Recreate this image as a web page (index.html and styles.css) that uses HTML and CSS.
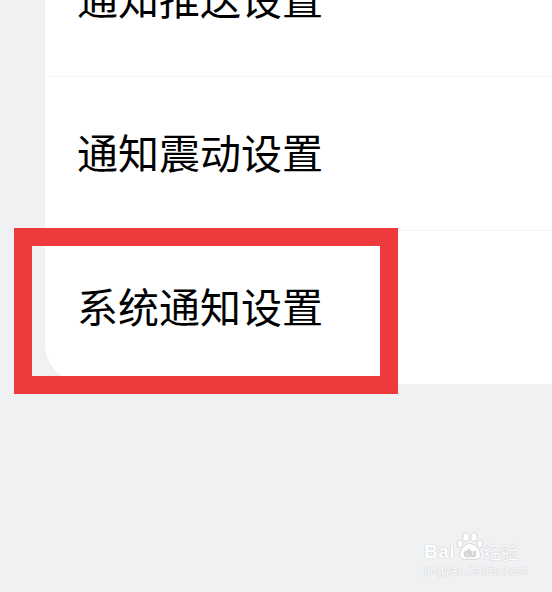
FILE: index.html
```html
<!DOCTYPE html>
<html lang="zh-CN">
<head>
    <meta charset="UTF-8">
    <meta name="viewport" content="width=device-width, initial-scale=1.0">
    <title>通知设置</title>
    <link rel="stylesheet" href="styles.css">
</head>
<body>
    <div class="card">
        <div class="row">通知推送设置</div>
        <div class="row">通知震动设置</div>
        <div class="row last">
            系统通知设置
            <div class="highlight"></div>
        </div>
    </div>

    <div class="watermark">
        <div class="wm-top">
            <span class="wm-bai">Bai</span>
            <svg class="wm-paw" width="28" height="29" viewBox="0 0 28 29">
                <g fill="#fff" stroke="#d6d7da" stroke-width="1">
                    <ellipse cx="10" cy="5" rx="3.2" ry="4.2"/>
                    <ellipse cx="18" cy="5" rx="3.2" ry="4.2"/>
                    <ellipse cx="4" cy="12" rx="3" ry="3.8"/>
                    <ellipse cx="24" cy="12" rx="3" ry="3.8"/>
                    <path d="M14 11.5 C9 11.5 3.5 18.5 3.5 23 C3.5 27 8 28 14 27 C20 28 24.5 27 24.5 23 C24.5 18.5 19 11.5 14 11.5 Z"/>
                </g>
                <text x="14" y="25" text-anchor="middle" class="wm-du">du</text>
            </svg>
            <span class="wm-jy">经验</span>
        </div>
        <div class="wm-url">jingyan.baidu.com</div>
    </div>
</body>
</html>
```

FILE: styles.css
```css
body {
    margin: 0;
    background-color: #f0f1f3;
    font-family: "Noto Sans CJK SC", "Noto Sans", sans-serif;
    overflow: hidden;
    height: 592px;
    position: relative;
}

.card {
    margin-top: -77px;
    margin-left: 45px;
    background-color: #ffffff;
    border-bottom-left-radius: 40px;
}

.row {
    position: relative;
    height: 154px;
    box-sizing: border-box;
    display: flex;
    align-items: center;
    padding-left: 32px;
    padding-bottom: 4px;
    font-size: 41px;
    line-height: 1;
    color: #000000;
    border-bottom: 1px solid #f6f6f7;
}

.row.last {
    height: 153px;
    border-bottom: none;
}

.highlight {
    position: absolute;
    left: -31px;
    top: -3px;
    width: 384px;
    height: 166px;
    box-sizing: border-box;
    border: 18px solid #ee3a3c;
}

.watermark {
    position: absolute;
    left: 424px;
    top: 531px;
    color: #ffffff;
    text-shadow: 0 0 1px #c2c3c7, 0 0 1px #c2c3c7;
}

.wm-top {
    display: flex;
    align-items: flex-end;
    height: 30px;
}

.wm-bai {
    font-family: "Liberation Sans", sans-serif;
    font-weight: bold;
    font-size: 19px;
    line-height: 18px;
    letter-spacing: 0.5px;
}

.wm-paw {
    margin-left: 1px;
    display: block;
}

.wm-du {
    font-family: "Liberation Sans", sans-serif;
    font-weight: bold;
    font-size: 10px;
    fill: #d6d7da;
}

.wm-jy {
    font-size: 17px;
    line-height: 18px;
}

.wm-url {
    font-family: "Liberation Sans", sans-serif;
    font-size: 12px;
    margin-top: 3px;
    letter-spacing: 0.4px;
}
```
